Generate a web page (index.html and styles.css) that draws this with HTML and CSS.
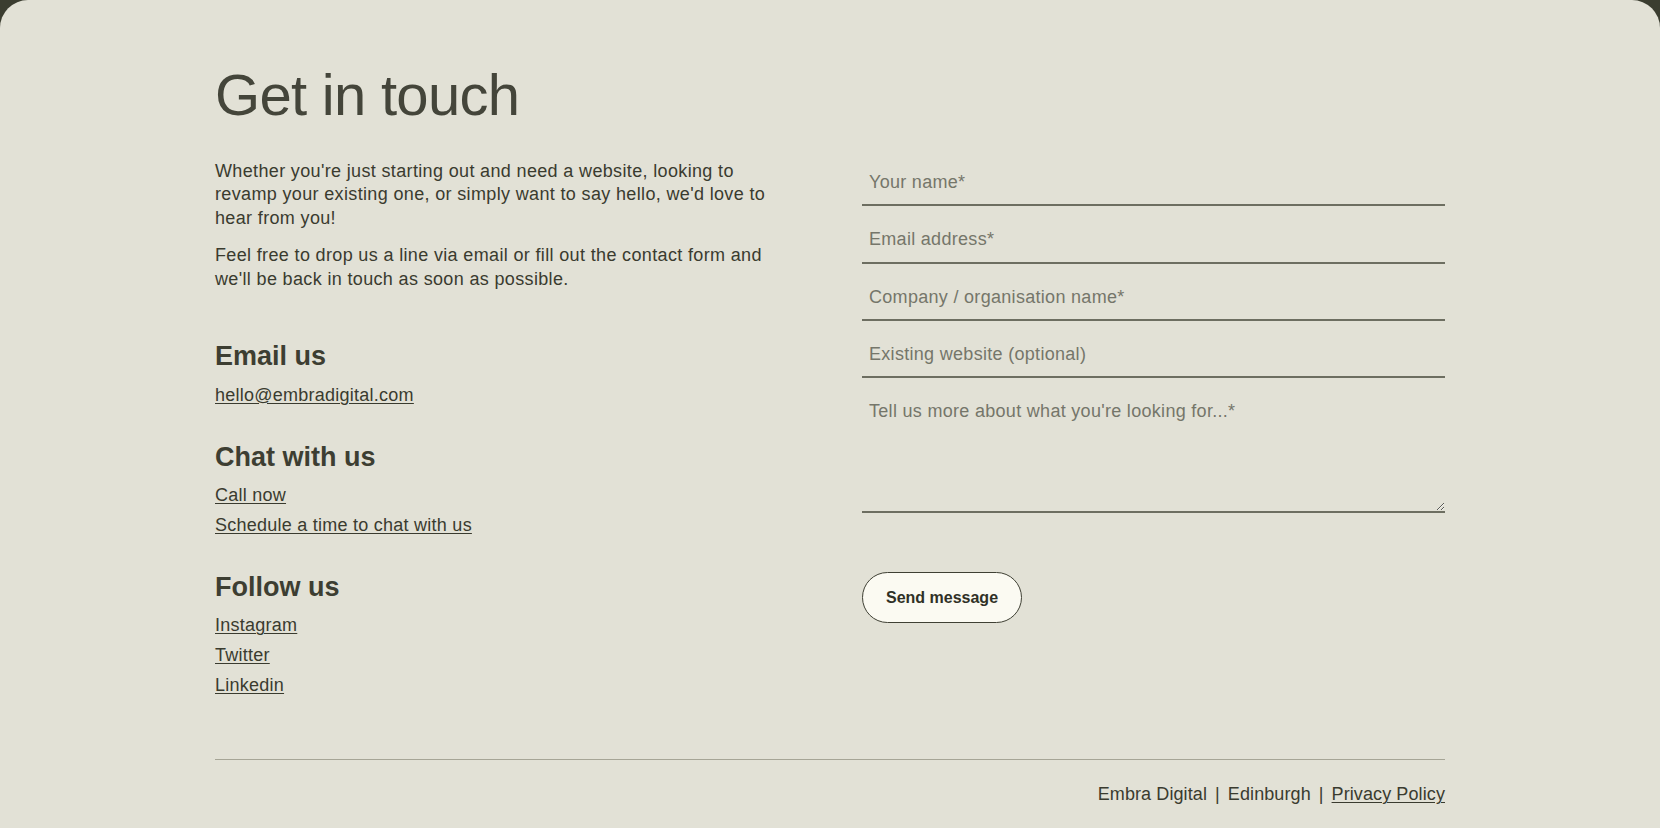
FILE: index.html
```html
<!DOCTYPE html>
<html lang="en">
<head>
    <meta charset="UTF-8">
    <meta name="viewport" content="width=device-width, initial-scale=1.0">
    <title>Get in touch | Embra Digital</title>
    <link rel="stylesheet" href="styles.css">
</head>
<body>

<main class="page">
    <div class="container">
        <h1>Get in touch</h1>

        <div class="contact">
            <!-- intro + ways to reach us -->
            <div class="contact-info">
                <p>Whether you're just starting out and need a website, looking to revamp your existing one, or simply want to say hello, we'd love to hear from you!</p>
                <p>Feel free to drop us a line via email or fill out the contact form and we'll be back in touch as soon as possible.</p>

                <div class="info-block first">
                    <h2>Email us</h2>
                    <a href="mailto:hello@embradigital.com">hello@embradigital.com</a>
                </div>

                <div class="info-block">
                    <h2>Chat with us</h2>
                    <a href="#">Call now</a>
                    <a href="#">Schedule a time to chat with us</a>
                </div>

                <div class="info-block">
                    <h2>Follow us</h2>
                    <a href="#">Instagram</a>
                    <a href="#">Twitter</a>
                    <a href="#">Linkedin</a>
                </div>
            </div>

            <!-- contact form -->
            <form class="contact-form" onsubmit="return false;">
                <input type="text" name="name" placeholder="Your name*">
                <input type="email" name="email" placeholder="Email address*">
                <input type="text" name="company" placeholder="Company / organisation name*">
                <input type="text" name="website" placeholder="Existing website (optional)">
                <textarea name="message" placeholder="Tell us more about what you're looking for...*"></textarea>
                <button type="submit">Send message</button>
            </form>
        </div>

        <footer class="footer">
            Embra Digital<span class="sep">|</span>Edinburgh<span class="sep">|</span><a href="#">Privacy Policy</a>
        </footer>
    </div>
</main>

</body>
</html>
```

FILE: styles.css
```css
body {
    margin: 0;
    background-color: #3b3d30;
    font-family: "Liberation Sans", Arial, sans-serif;
    color: #3a3b2f;
}
.page {
    background-color: #e2e1d6;
    border-radius: 28px 28px 0 0;
    min-height: 100vh;
    padding: 63px 0 16px;
    box-sizing: border-box;
}
.container {
    max-width: 1230px;
    margin: 0 auto;
}
h1 {
    font-size: 58px;
    font-weight: 400;
    line-height: 1.1;
    letter-spacing: -0.7px;
    color: #44453a;
    margin: 0 0 33px;
}
.contact {
    display: grid;
    grid-template-columns: 1fr 1fr;
    column-gap: 64px;
}
.contact-info p {
    font-size: 18px;
    line-height: 23.4px;
    letter-spacing: 0.35px;
    margin: 0 0 14.4px;
    max-width: 560px;
}
.info-block {
    margin-top: 31px;
}
.info-block.first {
    margin-top: 49px;
}
.info-block h2 {
    font-size: 27px;
    font-weight: 700;
    line-height: 1.2;
    margin: 0 0 7px;
    color: #3d3e32;
}
.info-block a {
    display: block;
    width: fit-content;
    font-size: 18px;
    line-height: 30px;
    letter-spacing: 0.25px;
}
a {
    color: #3a3b2f;
    text-decoration: underline;
    text-decoration-thickness: 1px;
    text-underline-offset: 2px;
}
.contact-form {
    display: flex;
    flex-direction: column;
    gap: 12px;
    padding-top: 1px;
}
.contact-form input,
.contact-form textarea {
    width: 100%;
    box-sizing: border-box;
    background: transparent;
    border: none;
    border-bottom: 2px solid #6d6e61;
    border-radius: 0;
    padding: 10px 7px;
    font-family: inherit;
    font-size: 18px;
    line-height: 23.4px;
    letter-spacing: 0.3px;
    color: #3a3b2f;
    outline: none;
}
.contact-form textarea {
    height: 123px;
    resize: vertical;
}
.contact-form input::placeholder,
.contact-form textarea::placeholder {
    color: #75766a;
}
.contact-form button {
    align-self: flex-start;
    margin-top: 47px;
    width: 160px;
    height: 51px;
    background-color: #fbfaf2;
    border: 1px solid #3f4034;
    border-radius: 30px;
    font-family: inherit;
    font-size: 16px;
    font-weight: 700;
    color: #2f3026;
    cursor: pointer;
}
.footer {
    margin-top: 59px;
    border-top: 1px solid #a6a596;
    padding-top: 23px;
    text-align: right;
    font-size: 18px;
    line-height: 23.4px;
    letter-spacing: 0.1px;
}
.footer .sep {
    margin: 0 8px;
}
```
